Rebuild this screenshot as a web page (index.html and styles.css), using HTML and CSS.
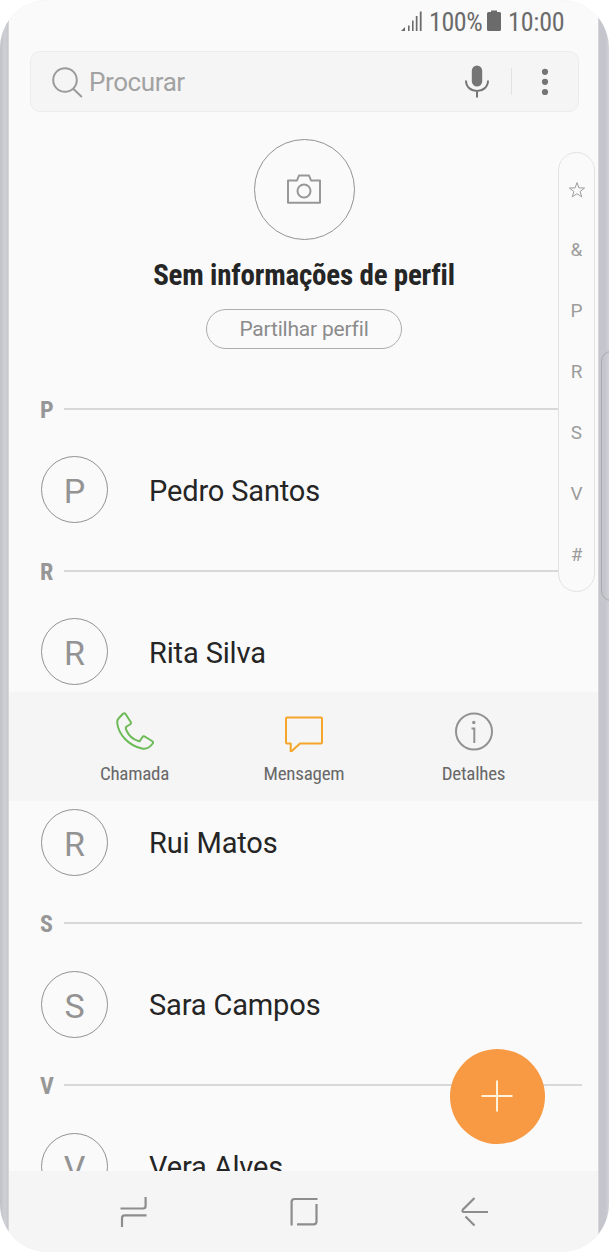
FILE: index.html
```html
<!DOCTYPE html>
<html lang="pt">
<head>
<meta charset="utf-8">
<title>Contactos</title>
<link rel="stylesheet" href="styles.css">
</head>
<body>
<div class="phone">
  <div class="side-key"></div>
  <div class="screen">
    <header class="status">
      <svg class="signal" width="21" height="20" viewBox="0 0 21 20"><path d="M0 20L4 16V20zM7 14.500h1.600V20H7zM11 9.500h1.600V20h-1.600zM14.800 5h1.700v15h-1.700zM18.800 0.500h1.800V20h-1.800z" fill="#6b6b6b"/></svg>
      <span class="condensed pct">100%</span>
      <svg class="battery" width="14" height="21" viewBox="0 0 14 21"><path d="M4 0.500h6V2h2.500q1.500 0 1.500 1.500v16q0 1.500-1.500 1.500h-11Q0 21 0 19.500v-16Q0 2 1.500 2H4z" fill="#6b6b6b"/></svg>
      <span class="condensed clock">10:00</span>
    </header>

    <div class="search">
      <svg class="lens" width="31" height="31" viewBox="0 0 31 31" fill="none" stroke="#9b9b9b" stroke-width="2"><circle cx="13" cy="13" r="11.800"/><path d="M21 21.500l8.800 8.500"/></svg>
      <span class="placeholder">Procurar</span>
      <svg class="mic" width="24" height="34" viewBox="0 0 24 34"><rect x="6.800" y="0.500" width="10.400" height="21" rx="5.200" fill="#757575"/><path d="M1 15.500C1 29.500 23 29.500 23 15.500M12 26v6.500" fill="none" stroke="#757575" stroke-width="2"/></svg>
      <span class="split"></span>
      <svg class="more" width="8" height="28" viewBox="0 0 8 28" fill="#757575"><circle cx="4" cy="3.800" r="3.100"/><circle cx="4" cy="13.800" r="3.100"/><circle cx="4" cy="24" r="3.100"/></svg>
    </div>

    <section class="profile">
      <div class="photo">
        <svg width="36" height="32" viewBox="0 0 36 32" fill="none" stroke="#979797" stroke-width="2"><path d="M2 6.500h9l2-5h10l2 5h9v22.300H2z" stroke-linejoin="round"/><circle cx="18" cy="17" r="6.500"/></svg>
      </div>
      <h1 class="condensed">Sem informações de perfil</h1>
      <div class="share">Partilhar perfil</div>
    </section>

    <main class="list">
      <div class="section"><b class="condensed">P</b><i></i></div>
      <div class="row"><span class="avatar">P</span><span class="name">Pedro Santos</span></div>
      <div class="section"><b class="condensed">R</b><i></i></div>
      <div class="row"><span class="avatar">R</span><span class="name">Rita Silva</span></div>
      <div class="actions">
        <div class="action">
          <svg width="40" height="40" viewBox="0 0 40 40" fill="none" stroke="#6cbb57" stroke-width="2" stroke-linejoin="round"><path d="M8 1.700Q9.500 0.500 10.700 2.200L15.700 10Q16.500 11.500 15 12.500L11.500 14.500Q10 15.500 11.500 18.500C14 24 19 27.800 23.500 29Q25 29.500 25.500 28L27.500 25Q28.200 23.800 29.700 24.500L37 29Q38.600 30 37.700 31.500Q33 38 27 36.500C13 33.500 3.500 22 2.200 11Q2 8 3.500 6.500Z"/></svg>
          <span class="condensed">Chamada</span>
        </div>
        <div class="action">
          <svg width="40" height="40" viewBox="0 0 40 40" fill="none" stroke="#f4a62a" stroke-width="2" stroke-linejoin="round"><path d="M3 5.500h34q1 0 1 1v24q0 1-1 1H16L6.700 40V31.500H3Q2 31.500 2 30.500V6.500Q2 5.500 3 5.500z"/></svg>
          <span class="condensed">Mensagem</span>
        </div>
        <div class="action">
          <svg width="40" height="40" viewBox="0 0 40 40" fill="none" stroke="#929292" stroke-width="2"><circle cx="20" cy="19.500" r="18"/><path d="M17.500 16.500h2.800V31"/><circle cx="19.800" cy="10.500" r="1.700" fill="#929292" stroke="none"/></svg>
          <span class="condensed">Detalhes</span>
        </div>
      </div>
      <div class="row low"><span class="avatar">R</span><span class="name">Rui Matos</span></div>
      <div class="section"><b class="condensed">S</b><i></i></div>
      <div class="row low"><span class="avatar">S</span><span class="name">Sara Campos</span></div>
      <div class="section"><b class="condensed">V</b><i></i></div>
      <div class="row low"><span class="avatar">V</span><span class="name">Vera Alves</span></div>
    </main>

    <nav class="index">
      <span><svg width="18" height="18" viewBox="0 0 18 18" fill="none" stroke="#9c9c9c" stroke-width="1"><path d="M9 1.600l1.900 5.300 5.700.1-4.500 3.500 1.600 5.400L9 12.700l-4.700 3.200 1.600-5.400L1.400 7l5.700-.1z"/></svg></span>
      <span>&amp;</span><span>P</span><span>R</span><span>S</span><span>V</span><span>#</span>
    </nav>

    <div class="fab"><svg width="33" height="33" viewBox="0 0 33 33" stroke="#fff3dc" stroke-width="2"><path d="M16 0.500v31M0.500 16h31"/></svg></div>
  </div>

  <footer class="navbar">
    <svg width="28" height="32" viewBox="0 0 28 32" fill="none" stroke="#8d8d8d" stroke-width="2.200"><path d="M25.600 1v9q0 2.500-2.500 2.500H0.500M2 31v-9q0-2.700 2.500-2.700H26.500"/></svg>
    <svg width="28" height="32" viewBox="0 0 28 32" fill="none" stroke="#8d8d8d" stroke-width="2.200"><path d="M1.600 29.500V6Q1.600 3 4.600 3H27.500M26.500 8v17.500q0 2.800-3 2.800H7"/></svg>
    <svg width="28" height="32" viewBox="0 0 28 32" fill="none" stroke="#8d8d8d" stroke-width="2.200"><path d="M14.500 2L3 13.500Q1.500 16 4 16H28M5.500 20.500L14.500 29.500"/></svg>
  </footer>
</div>
</body>
</html>
```
FILE: styles.css
```css
* { box-sizing: border-box; }
body {
  margin: 0;
  background: #fff;
  font-family: Roboto, "Liberation Sans", sans-serif;
}
svg { display: block; flex: none; }
.condensed { font-family: "Roboto Condensed", Roboto, sans-serif; font-stretch: 75%; }
.phone {
  position: relative;
  display: flex;
  flex-direction: column;
  width: 609px;
  height: 1252px;
  padding: 0 11px 0 9px;
  border-radius: 48px;
  overflow: hidden;
  background: linear-gradient(90deg, #c1c2c7 0, #cfd0d5 5px, #c6c7cc 8px, #e6e6e8 9px, #e6e6e8 598px, #c5c5cc 599px, #c5c5cd 605px, #d0d0d6 609px);
}
.side-key {
  position: absolute;
  left: 601px;
  top: 351px;
  width: 20px;
  height: 250px;
  border: 1px solid #a9a9b0;
  border-radius: 10px;
}
.screen {
  position: relative;
  height: 1171px;
  overflow: hidden;
  background: #fafafa;
}
.status {
  display: flex;
  height: 51px;
  padding: 11px 0 0 392px;
  color: #6b6b6b;
  font-size: 26px;
  line-height: 22px;
}
.pct { width: 54px; margin-left: 7px; letter-spacing: -0.4px; }
.battery { margin-left: 4px; margin-top: -1px; }
.clock { margin-left: 7px; letter-spacing: -0.2px; }
.search {
  display: flex;
  align-items: center;
  width: 549px;
  height: 61px;
  margin-left: 21px;
  padding-left: 21px;
  border: 1px solid #ececec;
  border-radius: 10px;
  background: #f5f5f5;
}
.lens { margin-top: 2px; }
.placeholder {
  width: 376px;
  margin-left: 6px;
  color: #a2a2a2;
  font-size: 26px;
  letter-spacing: -0.4px;
}
.split { width: 1px; height: 27px; margin: 0 29px 0 22px; background: #e2e2e2; }
.profile {
  display: flex;
  flex-direction: column;
  align-items: center;
  height: 256px;
  padding: 27px 0 0 1px;
}
.photo {
  display: grid;
  place-items: center;
  width: 101px;
  height: 101px;
  border: 1px solid #929292;
  border-radius: 50%;
}
.profile h1 {
  margin: 18px 0 0;
  color: #252525;
  font-size: 29px;
  line-height: 34px;
  letter-spacing: -0.2px;
  white-space: nowrap;
}
.share {
  width: 196px;
  height: 40px;
  margin-top: 17px;
  border: 1px solid #adadad;
  border-radius: 20px;
  color: #8b8b8b;
  font-size: 21px;
  line-height: 39px;
  letter-spacing: -0.2px;
  text-align: center;
}
.section {
  display: flex;
  align-items: center;
  height: 81px;
  padding: 0 16px 0 31px;
}
.section b { width: 24px; color: #979797; font-size: 24px; padding-top: 2px; }
.section i { flex: 1; height: 2px; background: #d8d8d8; }
.row { display: flex; align-items: center; height: 81px; padding-left: 32px; }
.row.low { padding-top: 1px; }
.avatar {
  width: 67px;
  height: 67px;
  border: 1px solid #929292;
  border-radius: 50%;
  color: #939393;
  font-size: 34px;
  line-height: 68px;
  text-align: center;
}
.name { margin-left: 41px; color: #252525; font-size: 29px; letter-spacing: -0.15px; padding-top: 2px; }
.actions {
  display: flex;
  justify-content: center;
  height: 109px;
  padding: 20px 0 0 1px;
  background: #f5f5f5;
}
.action {
  display: flex;
  flex-direction: column;
  align-items: center;
  width: 169.500px;
  color: #686868;
  font-size: 19px;
  letter-spacing: -0.25px;
}
.action span { margin-top: 11px; line-height: 22px; }
.index {
  position: absolute;
  left: 549px;
  top: 152px;
  width: 37px;
  height: 440px;
  padding-top: 7px;
  border: 1px solid #e2e2e2;
  border-radius: 19px;
  background: #fafafa;
}
.index span {
  display: grid;
  place-items: center;
  height: 60.900px;
  color: #9c9c9c;
  font-size: 19px;
  line-height: 20px;
}
.index span + span { padding-bottom: 2px; }
.fab {
  position: absolute;
  left: 441px;
  top: 1049px;
  display: grid;
  place-items: center;
  width: 95px;
  height: 95px;
  border-radius: 50%;
  background: #f89944;
}
.navbar {
  display: flex;
  gap: 142px;
  height: 81px;
  padding: 25px 0 0 111px;
  background: #f5f5f5;
}
```
